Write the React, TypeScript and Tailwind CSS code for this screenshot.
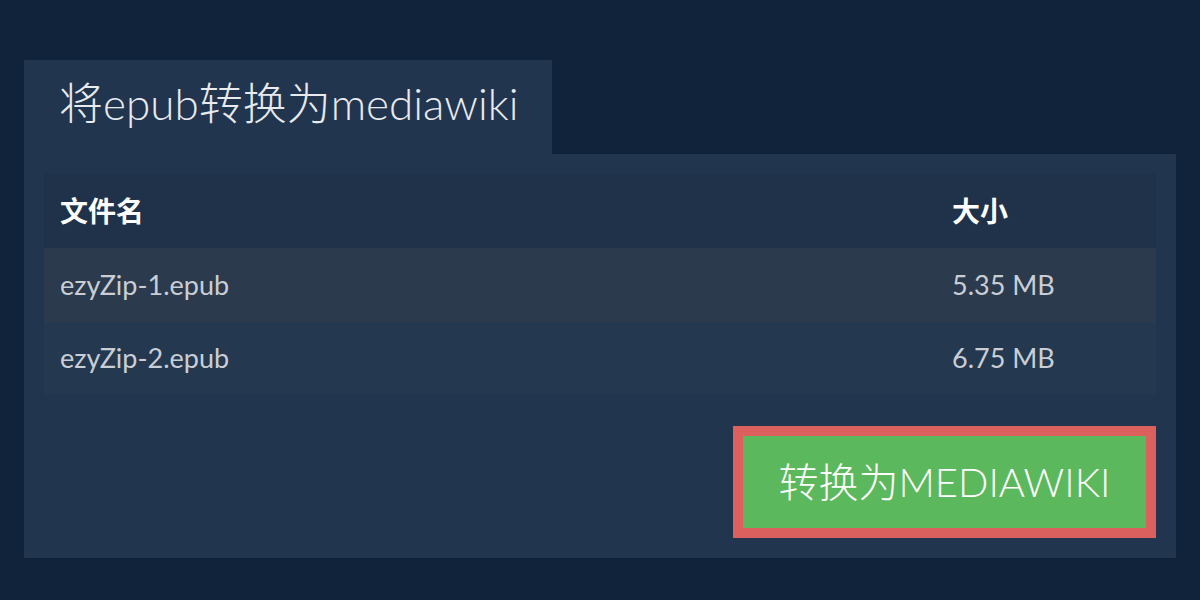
import React from "react";

export default function App() {
  const rows = [
    { name: "ezyZip-1.epub", size: "5.35 MB", bg: "bg-[#2b3a4c]" },
    { name: "ezyZip-2.epub", size: "6.75 MB", bg: "bg-[#24384f]" },
  ];
  return (
    <div
      className="w-[1200px] h-[600px] bg-[#10233a] pt-[60px] px-[24px]"
      style={{ fontFamily: "Lato, 'Noto Sans CJK SC', sans-serif" }}
    >
      <div className="w-[528px] h-[94px] bg-[#21354e] flex items-center pl-[35px] pb-[8px]">
        <span className="text-[44px] font-light text-[#e8eaee] leading-none">将epub转换为mediawiki</span>
      </div>
      <div className="bg-[#21354e] p-[20px] flex flex-col">
        <div className="flex flex-col">
          <div className="h-[74px] bg-[#1f324a] flex items-center pl-[16px] text-[28px] font-bold text-white">
            <div className="w-[892px]">文件名</div>
            <div>大小</div>
          </div>
          {rows.map((r, i) => (
            <div
              key={r.name}
              className={`${i === 0 ? "h-[74px]" : "h-[72px]"} ${r.bg} flex items-center pl-[16px] text-[27px] text-[#c9ced6]`}
            >
              <div className="w-[892px]">{r.name}</div>
              <div>{r.size}</div>
            </div>
          ))}
        </div>
        <div className="flex justify-end mt-[32px]">
          <div className="w-[423px] h-[112px] border-[10px] border-[#dc605e] bg-[#5cb85c] flex items-center justify-center">
            <span className="text-[40px] font-light text-white leading-none">转换为MEDIAWIKI</span>
          </div>
        </div>
      </div>
    </div>
  );
}
